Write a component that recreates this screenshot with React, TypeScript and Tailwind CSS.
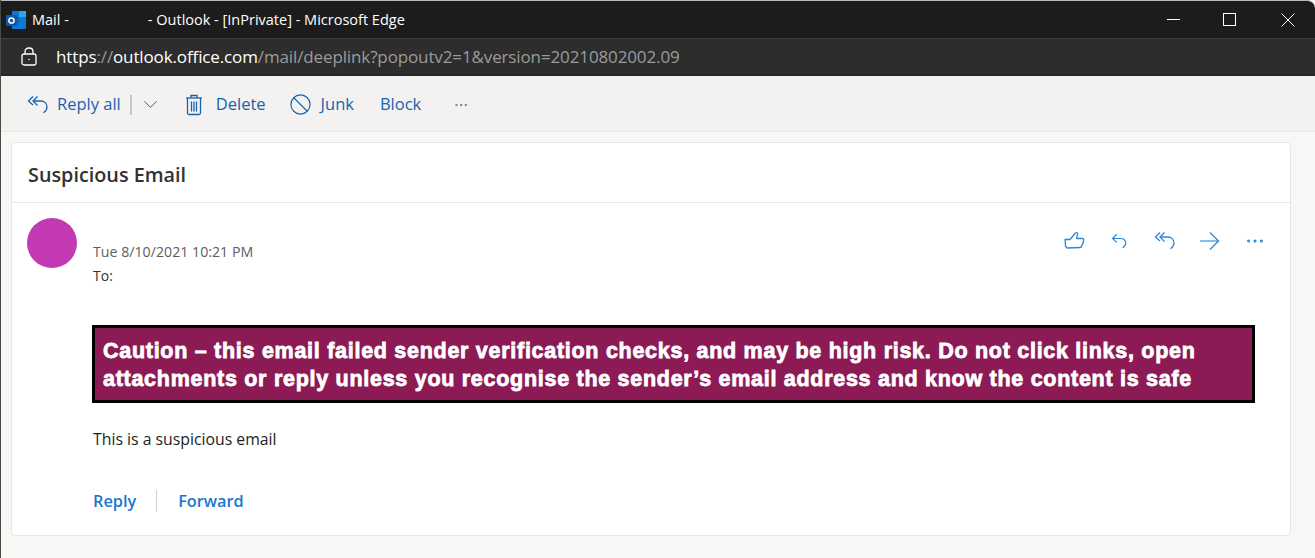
import { Ban, ChevronDown, Ellipsis } from 'lucide-react'

function ReplyIcon({ size = 20 }: { size?: number }) {
  return (
    <svg width={size} height={size} viewBox="0 0 20 20" fill="none" stroke="currentColor" strokeWidth="1.3">
      <path d="M7.5 2.5 L2.8 7.2 L7.5 11.5" />
      <path d="M2.8 7.2 H11 C15 7.2 17.5 9.5 17.5 12.5 C17.5 14.8 16 16.4 14 17.5" />
    </svg>
  )
}

function ReplyAllIcon({ size = 22 }: { size?: number }) {
  return (
    <svg width={size} height={size} viewBox="0 0 22 22" fill="none" stroke="currentColor" strokeWidth="1.3">
      <path d="M6 2.5 L1.5 7 L6 11" />
      <path d="M10.5 2.5 L6 7 L10.5 11.5" />
      <path d="M6 7 H13.5 C17.5 7 20 9.5 20 13 C20 15.5 18.5 17.5 16.5 18.8" />
    </svg>
  )
}

function ThumbIcon() {
  return (
    <svg width="21" height="20" viewBox="0 0 21 20" fill="none" stroke="currentColor" strokeWidth="1.3" strokeLinejoin="round">
      <path d="M1 8.5 H6 L11.5 2 C13 1 14 2 13.5 4 L12.5 7.5 H18.5 C20 7.5 20.2 9.5 19 10.5 C19.5 12 19 13 18 13.5 C18 15 17.5 16.5 16 16.5 L3 17 L1.5 15 Z" />
    </svg>
  )
}

function ForwardArrow() {
  return (
    <svg width="21" height="20" viewBox="0 0 21 20" fill="none" stroke="currentColor" strokeWidth="1.3">
      <path d="M1 10 H19.5" strokeWidth="1.6" className="opacity-70" />
      <path d="M11 1.5 L19.5 10 L11 18.5" />
    </svg>
  )
}

function TrashIcon() {
  return (
    <svg width="18" height="22" viewBox="0 0 18 22" fill="none" stroke="currentColor" strokeWidth="1.3">
      <path d="M1 4 H17" />
      <path d="M6 4 V1.5 H12 V4" />
      <path d="M2.5 4 V19 C2.5 20 3 20.5 4 20.5 H14 C15 20.5 15.5 20 15.5 19 V4" />
      <path d="M6.5 7.5 V17.5 M9 7.5 V17.5 M11.5 7.5 V17.5" />
    </svg>
  )
}

export default function App() {
  return (
    <div className="w-[1315px] h-[558px] overflow-hidden bg-[#f8f7f6] flex flex-col border-l border-[#4a4a44] font-['Open_Sans','Noto_Sans',sans-serif]">
      {/* Title bar */}
      <div className="h-[38px] bg-[#1c1c1c] flex items-center pl-[5px] shrink-0 border-t border-[#b8b8b8] rounded-tr-lg">
        <svg width="20" height="20" viewBox="0 0 20 20" className="shrink-0">
          <rect x="6" y="1" width="14" height="18" rx="1" fill="#0f78d4" />
          <rect x="13" y="1" width="7" height="6" fill="#28a8ea" />
          <rect x="6" y="7" width="7" height="6" fill="#0364b8" />
          <rect x="0" y="5" width="11" height="11" rx="1" fill="#0a5aa8" />
          <circle cx="5.5" cy="10.5" r="2.6" fill="none" stroke="#fff" strokeWidth="1.5" />
        </svg>
        <span className="ml-[6px] text-[14.5px] text-white">Mail -</span>
        <span className="ml-[79px] text-[14.5px] text-white">- Outlook - [InPrivate] - Microsoft Edge</span>
        <div className="ml-auto flex items-center text-white">
          <div className="w-[13px] h-px bg-white mr-[43px]" />
          <div className="w-[13px] h-[13px] border border-white mr-[45px]" />
          <svg width="14" height="14" viewBox="0 0 14 14" stroke="currentColor" className="mr-[20px]">
            <path d="M0.5 0.5 L13.5 13.5 M13.5 0.5 L0.5 13.5" />
          </svg>
        </div>
      </div>

      {/* Address bar */}
      <div className="h-[38px] bg-[#2d2d2d] flex items-center pl-[20px] shrink-0 border-t border-[#3d3d3d] border-b-2 border-b-[#262626]">
        <svg width="16" height="19" viewBox="0 0 16 19" fill="none" stroke="#fff" strokeWidth="1.3">
          <rect x="1" y="7" width="14" height="11" rx="2" />
          <path d="M4 7 V4.5 C4 2.5 5.5 1 8 1 C10.5 1 12 2.5 12 4.5 V7" />
          <circle cx="8" cy="12.5" r="0.8" fill="#fff" stroke="none" />
        </svg>
        <span className="ml-[19px] text-[17px] tracking-[-0.125px] text-[#9b9b9b]">
          <span className="text-white">https</span>://<span className="text-white">outlook.office.com</span>/mail/deeplink?popoutv2=1&amp;version=20210802002.09
        </span>
      </div>

      {/* Toolbar */}
      <div className="h-[56px] bg-[#f3f2f1] flex items-center pl-[26px] pt-[2px] text-[#1565ad] text-[16.5px] shrink-0 border-b border-[#eceae8]">
        <ReplyAllIcon />
        <span className="ml-[8px]">Reply all</span>
        <div className="ml-[9px] w-[2px] h-[20px] bg-[#c8c6c4]" />
        <ChevronDown size={23} strokeWidth={1} className="ml-[7px]" />
        <div className="ml-[23px]"><TrashIcon /></div>
        <span className="ml-[13px]">Delete</span>
        <Ban size={23} strokeWidth={1.2} className="ml-[23px]" />
        <span className="ml-[9px]">Junk</span>
        <span className="ml-[26px]">Block</span>
        <Ellipsis size={16} strokeWidth={1.2} className="ml-[32px] text-[#605e5c]" />
      </div>

      {/* Message card */}
      <div className="ml-[10px] mr-[24px] mt-[10px] h-[394px] bg-white border border-[#e8e6e4] rounded-[4px] flex flex-col">
        <div className="h-[60px] flex items-center pl-[16px] pt-[4px] border-b border-[#e8e6e4] text-[19.8px] font-semibold text-[#323130] shrink-0">
          Suspicious Email
        </div>

        <div className="flex pl-[15px] pt-[15px] pr-[24px]">
          <div className="w-[50px] h-[50px] rounded-full bg-[#c239b3] shrink-0" />
          <div className="ml-[16px] flex-1">
            <div className="pt-[24px] text-[14.2px] leading-[20px] text-[#605e5c]">Tue 8/10/2021 10:21 PM</div>
            <div className="mt-[4px] text-[14px] leading-[20px] font-medium text-[#323130]">To:</div>
          </div>
          <div className="flex items-center h-[20px] mt-[13px] text-[#2b88d8]">
            <ThumbIcon />
            <div className="ml-[25px]"><ReplyIcon size={18} /></div>
            <div className="ml-[26px]"><ReplyAllIcon /></div>
            <div className="ml-[23px]"><ForwardArrow /></div>
            <Ellipsis size={22} strokeWidth={1.4} className="ml-[24px]" />
          </div>
        </div>

        <div className="ml-[80px] mr-[35px] mt-[39px] h-[78px] bg-[#8b1a55] border-[3px] border-black pl-[8px] pr-[4px] pt-[9px] text-[21.5px] leading-[28px] text-white font-bold font-['Liberation_Sans',sans-serif] tracking-[0.72px] [-webkit-text-stroke:0.8px_white]">
          Caution – this email failed sender verification checks, and may be high risk. Do not click links, open attachments or reply unless you recognise the sender’s email address and know the content is safe
        </div>

        <div className="ml-[81px] mt-[26px] text-[15.8px] leading-[20px] text-[#201f1e]">This is a suspicious email</div>

        <div className="ml-[81px] mt-[40px] flex items-center text-[16.3px] font-semibold text-[#1a76d2]">
          <span>Reply</span>
          <div className="ml-[20px] w-px h-[22px] bg-[#d2d0ce]" />
          <span className="ml-[21px]">Forward</span>
        </div>
      </div>
    </div>
  )
}
